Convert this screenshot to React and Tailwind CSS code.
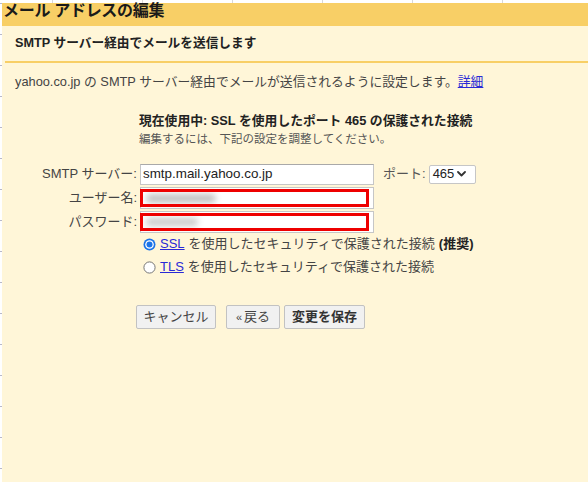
import React from "react";

const FONT = "font-['Liberation_Sans','Noto_Sans_CJK_JP',sans-serif]";

function Radio({ checked }) {
  return checked ? (
    <svg width="13" height="13" viewBox="0 0 13 13" className="shrink-0">
      <circle cx="6.5" cy="6.5" r="6" fill="#1a73e8" />
      <circle cx="6.5" cy="6.5" r="4.3" fill="#ffffff" />
      <circle cx="6.5" cy="6.5" r="3" fill="#1a73e8" />
    </svg>
  ) : (
    <svg width="13" height="13" viewBox="0 0 13 13" className="shrink-0">
      <circle cx="6.5" cy="6.5" r="5.6" fill="#ffffff" stroke="#767676" strokeWidth="1" />
    </svg>
  );
}

function Chevron() {
  return (
    <svg width="9" height="6" viewBox="0 0 9 6" className="ml-[3px]">
      <path d="M1 1 L4.5 4.5 L8 1" fill="none" stroke="#333" strokeWidth="1.8" strokeLinecap="round" strokeLinejoin="round" />
    </svg>
  );
}

function Label({ children }) {
  return (
    <div className="w-[135px] text-right text-[13px] text-[#444] leading-[22px] whitespace-nowrap">
      {children}
    </div>
  );
}

export default function App() {
  return (
    <div className={`w-[588px] h-[482px] overflow-hidden bg-[#fff6d8] ${FONT} flex flex-col`}>
      {/* top strip */}
      <div className="h-[3px] shrink-0 bg-white bg-[repeating-linear-gradient(90deg,#ffffff_0px,#ffffff_52px,#d8d8d8_52px,#d8d8d8_53px,#ffffff_53px,#ffffff_90px)]" />
      <div className="flex flex-1">
        {/* left gutter */}
        <div className="w-[2px] shrink-0 bg-[repeating-linear-gradient(180deg,#b8b8c8_0px,#b8b8c8_1px,#ffffff_1px,#ffffff_31px)]" />
        <div className="flex-1 flex flex-col">
          {/* header */}
          <div className="h-[23px] bg-[#f8cf66] flex items-start pl-[1px]">
            <span className="text-[16px] font-bold text-[#1a1a1a] leading-[18px] mt-[-1px] tracking-[-0.3px]">
              メール アドレスの編集
            </span>
          </div>
          {/* section title */}
          <div className="h-[35px] flex items-center pl-[13px]">
            <span className="text-[12.7px] font-bold text-[#222]">SMTP サーバー経由でメールを送信します</span>
          </div>
          <div className="h-[2px] ml-[3px] bg-[#f8cf66]" />
          {/* description */}
          <div className="h-[38px] flex items-center pl-[13px]">
            <span className="text-[12.8px] text-[#444] whitespace-nowrap">
              yahoo.co.jp の SMTP サーバー経由でメールが送信されるように設定します。
              <span className="text-[#2a2ad6] underline">詳細</span>
            </span>
          </div>
          {/* status */}
          <div className="mt-[12px] ml-[137px] flex flex-col">
            <div className="h-[16px] leading-[16px] text-[12.8px] font-bold text-[#222] whitespace-nowrap">
              現在使用中: SSL を使用したポート 465 の保護された接続
            </div>
            <div className="mt-[2px] h-[16px] leading-[16px] text-[11.5px] text-[#555] whitespace-nowrap">
              編集するには、下記の設定を調整してください。
            </div>
          </div>
          {/* form */}
          <div className="mt-[16px] flex flex-col gap-[2px]">
            <div className="flex items-center h-[22px]">
              <Label>SMTP サーバー:</Label>
              <div className="ml-[3px] w-[234px] h-[21px] bg-white border border-[#c6c6c6] border-t-[#a9a9a9] flex items-center pl-[2px]">
                <span className="text-[13.4px] text-[#222]">smtp.mail.yahoo.co.jp</span>
              </div>
              <span className="ml-[9px] text-[13px] text-[#555]">ポート:</span>
              <div className="ml-[3px] w-[47px] h-[19px] bg-white border border-[#c6c6c6] rounded-[2px] flex items-center pl-[3px]">
                <span className="text-[13px] text-[#222]">465</span>
                <Chevron />
              </div>
            </div>
            <div className="flex items-center h-[22px]">
              <Label>ユーザー名:</Label>
              <div className="relative ml-[3px] w-[234px] h-[22px] bg-white border border-[#c6c6c6]">
                <div className="absolute left-[5px] top-[6px] w-[70px] h-[9px] rounded-full bg-[#c2c2c2] blur-[3px]" />
                <div className="absolute left-[-1px] top-[1px] right-[4px] bottom-[1px] border-[3px] border-[#ee0000]" />
              </div>
            </div>
            <div className="flex items-center h-[22px]">
              <Label>パスワード:</Label>
              <div className="relative ml-[3px] w-[234px] h-[22px] bg-white border border-[#c6c6c6]">
                <div className="absolute left-[5px] top-[6px] w-[52px] h-[8px] rounded-full bg-[#cacaca] blur-[3px]" />
                <div className="absolute left-[-1px] top-[1px] right-[4px] bottom-[1px] border-[3px] border-[#ee0000]" />
              </div>
            </div>
          </div>
          {/* radios */}
          <div className="mt-[1px] ml-[141px] flex flex-col gap-[3px]">
            <div className="flex items-center h-[20px] whitespace-nowrap text-[13px] text-[#444]">
              <Radio checked />
              <span className="ml-[4px] text-[#2a2ad6] underline">SSL</span>
              <span className="ml-[4px]">を使用したセキュリティで保護された接続</span>
              <span className="ml-[4px] font-bold text-[#222]">(推奨)</span>
            </div>
            <div className="flex items-center h-[20px] whitespace-nowrap text-[13px] text-[#444]">
              <Radio />
              <span className="ml-[4px] text-[#2a2ad6] underline">TLS</span>
              <span className="ml-[4px]">を使用したセキュリティで保護された接続</span>
            </div>
          </div>
          {/* buttons */}
          <div className="mt-[28px] ml-[134px] flex items-center">
            <button className="h-[24px] w-[80px] border border-[#c2c2c2] bg-[#f1f1f1] rounded-[2px] text-[13px] text-[#444] flex items-center justify-center">
              キャンセル
            </button>
            <button className="ml-[10px] h-[24px] w-[54px] border border-[#c2c2c2] bg-[#f1f1f1] rounded-[2px] text-[13px] text-[#444] flex items-center justify-center">
              <span className="text-[11px] mr-[2px]">«</span>戻る
            </button>
            <button className="ml-[4px] h-[24px] w-[81px] border border-[#c2c2c2] bg-[#f1f1f1] rounded-[2px] text-[13px] font-bold text-[#333] flex items-center justify-center">
              変更を保存
            </button>
          </div>
        </div>
      </div>
    </div>
  );
}
